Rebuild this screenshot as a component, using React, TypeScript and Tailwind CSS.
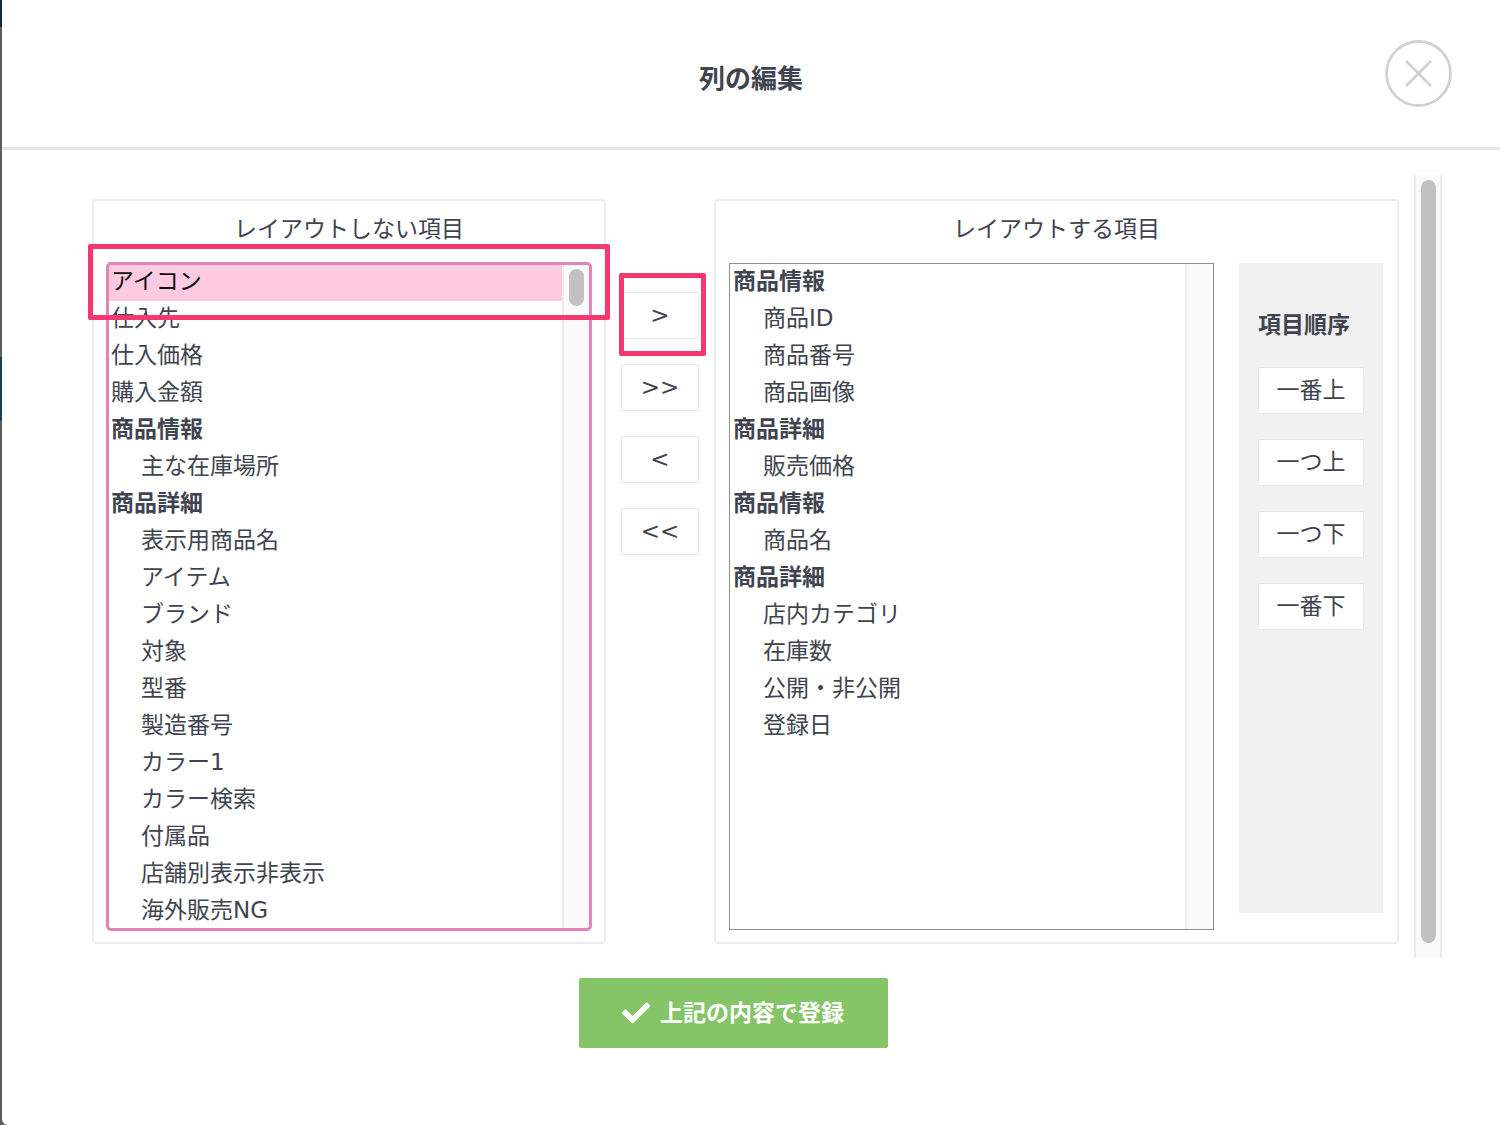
import type { ReactNode } from "react";
import { FaCheck } from "react-icons/fa";
import clsx from "clsx";

type Group = { label: string; items: string[] };

const LOOSE_ITEMS = ["アイコン", "仕入先", "仕入価格", "購入金額"];

const HIDDEN_GROUPS: Group[] = [
  { label: "商品情報", items: ["主な在庫場所"] },
  {
    label: "商品詳細",
    items: [
      "表示用商品名", "アイテム", "ブランド", "対象", "型番", "製造番号",
      "カラー1", "カラー検索", "付属品", "店舗別表示非表示", "海外販売NG",
    ],
  },
];

const SHOWN_GROUPS: Group[] = [
  { label: "商品情報", items: ["商品ID", "商品番号", "商品画像"] },
  { label: "商品詳細", items: ["販売価格"] },
  { label: "商品情報", items: ["商品名"] },
  { label: "商品詳細", items: ["店内カテゴリ", "在庫数", "公開・非公開", "登録日"] },
];

const MOVES = [
  { sign: ">", label: "選択した項目を追加", marked: true },
  { sign: ">>", label: "すべて追加" },
  { sign: "<", label: "選択した項目を外す" },
  { sign: "<<", label: "すべて外す" },
];

const ORDERS = ["一番上", "一つ上", "一つ下", "一番下"];

const OPTION = "-mb-0.5 h-[39px] min-h-0 p-0 checked:bg-linear-to-r checked:from-[#ffcae1] checked:to-[#ffcae1]";

// red frame drawn over the step to click
function Marker({ className }: { className: string }) {
  return <span className={clsx("pointer-events-none absolute rounded-xs border-5 border-[#f5386f]", className)} />;
}

type ItemListProps = { id: string; loose?: string[]; groups: Group[]; selected?: string[]; focused?: boolean };

function ItemList({ id, loose = [], groups, selected = [], focused }: ItemListProps) {
  return (
    <div
      className={clsx(
        "flex h-[667px] border",
        focused ? "rounded-sm border-[#e583b2] outline-3 -outline-offset-2 outline-[#e583b2]" : "border-[#8f8f8f]",
      )}
    >
      <select
        id={id}
        multiple
        size={18}
        defaultValue={selected}
        className="-mt-0.5 min-w-0 flex-1 appearance-none overflow-y-auto bg-transparent p-0 outline-none [scrollbar-width:none]"
      >
        {loose.map((item) => (
          <option key={item} className={clsx(OPTION, "pl-[3px]")}>{item}</option>
        ))}
        {groups.map(({ label, items }, i) => (
          <optgroup key={i} label={label} className="p-0 pl-px font-bold">
            {items.map((item) => (
              <option key={item} className={clsx(OPTION, "pl-8 font-normal before:hidden first:mt-0.5")}>{item}</option>
            ))}
          </optgroup>
        ))}
      </select>
      <div className="w-7 shrink-0 border-l-2 border-[#ebebeb] bg-[#fafafa] pt-[5px]">
        {focused && <div className="ml-[5px] h-[37px] w-[15px] rounded-full bg-[#c1c1c1]" />}
      </div>
    </div>
  );
}

function PlainButton({ children, label, className }: { children: ReactNode; label?: string; className: string }) {
  return (
    <button type="button" aria-label={label} className={clsx("h-[47px] rounded-xs border border-[#e6e6e6] bg-white", className)}>
      {children}
    </button>
  );
}

export default function App() {
  return (
    <div className="flex min-h-screen bg-[#5d5d5f] font-['DejaVu_Sans','Noto_Sans_CJK_JP',sans-serif] text-[23px] text-[#3f4450]">
      {/* sliver of the page behind the dialog */}
      <div className="w-0.5">
        <div className="h-[27px] bg-[#0b2a4a]" />
        <div className="mt-[330px] h-16 bg-[#0f4258]" />
      </div>
      <div role="dialog" aria-labelledby="title" className="flex-1 rounded-bl-md bg-white">
        <header className="relative flex h-[150px] items-center justify-center border-b-3 border-[#e6e6e6] pt-3">
          <h1 id="title" className="text-[26px] font-bold">列の編集</h1>
          <button type="button" aria-label="閉じる" className="absolute top-10 right-12">
            <svg viewBox="0 0 67 67" className="size-[67px]" fill="none" stroke="#d1d1d1" strokeWidth="2.8">
              <circle cx="33.5" cy="33.5" r="32" />
              <path d="M21 21 46 46M46 21 21 46" />
            </svg>
          </button>
        </header>

        <main className="mt-[25px] mr-[58px] ml-[90px] flex gap-[15px]">
          <div className="flex flex-1 items-start pt-6 pb-[14px]">
            <section className="relative flex-1 rounded-sm border-2 border-[#ededed] px-[13px] pb-3">
              <label htmlFor="hidden-items" className="block h-[62px] pt-0.5 text-center leading-[52px]">レイアウトしない項目</label>
              <ItemList id="hidden-items" loose={LOOSE_ITEMS} groups={HIDDEN_GROUPS} selected={["アイコン"]} focused />
              <Marker className="-inset-x-[6px] top-[43px] h-[76px]" />
            </section>

            <div className="flex w-[108px] flex-col items-center gap-[25px] pt-[93px]">
              {MOVES.map(({ sign, label, marked }) => (
                <div key={sign} className="relative">
                  <PlainButton label={label} className="w-[78px]">{sign}</PlainButton>
                  {marked && <Marker className="-top-[19px] -right-[7px] -left-0.5 h-[83px]" />}
                </div>
              ))}
            </div>

            <section className="w-[685px] rounded-sm border-2 border-[#ededed] px-[13px] pb-3">
              <label htmlFor="shown-items" className="block h-[62px] pt-0.5 text-center leading-[52px]">レイアウトする項目</label>
              <div className="grid grid-cols-[1fr_144px] items-start gap-[25px] pr-px">
                <ItemList id="shown-items" groups={SHOWN_GROUPS} />
                <div className="flex h-[650px] flex-col items-center gap-[25px] bg-[#f1f1f1] pt-[45px]">
                  <h2 className="w-[106px] font-bold leading-[34px]">項目順序</h2>
                  {ORDERS.map((name) => (
                    <PlainButton key={name} className="w-[106px]">{name}</PlainButton>
                  ))}
                </div>
              </div>
            </section>
          </div>

          <div className="w-7 border-x-2 border-[#ebebeb] bg-[#fafafa] pt-[5px] pl-[5px]">
            <div className="h-[763px] w-[15px] rounded-full bg-[#c1c1c1]" />
          </div>
        </main>

        <footer className="mt-5 flex justify-center pr-9">
          <button type="submit" className="flex h-[70px] w-[309px] items-center justify-center gap-2.5 rounded-xs bg-[#85c467] font-bold text-white">
            <FaCheck className="size-7" />
            上記の内容で登録
          </button>
        </footer>
      </div>
    </div>
  );
}
